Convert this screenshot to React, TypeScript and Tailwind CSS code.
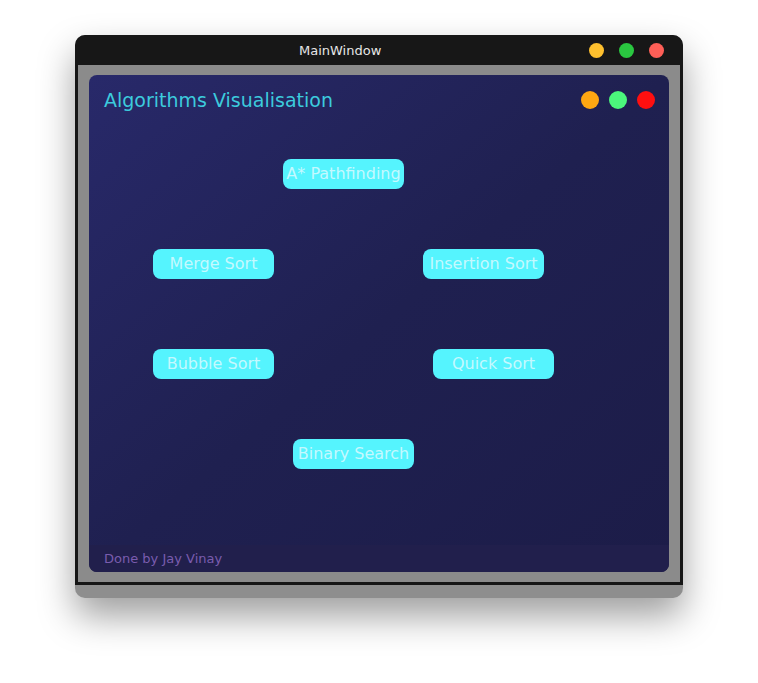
import React from "react";

const font = { fontFamily: '"DejaVu Sans", "Liberation Sans", sans-serif' };

function Btn({ label }: { label: string }) {
  return (
    <div className="w-[121px] h-[30px] rounded-[8px] bg-[#55f4fe] text-[#c4f9ff] text-[16px] flex items-center justify-center whitespace-nowrap leading-none">
      {label}
    </div>
  );
}

export default function App() {
  return (
    <div className="w-[758px] h-[683px] bg-white relative" style={font}>
      <div className="absolute left-[75px] top-[35px] w-[608px] rounded-[10px] bg-[#8e8e8e] shadow-[0_18px_36px_rgba(0,0,0,0.38)]">
        {/* title bar */}
        <div className="h-[30px] bg-[#171717] rounded-t-[10px] flex items-center relative">
          <div className="pl-[224px] text-[13px] text-[#e6e6e6] leading-none">MainWindow</div>
          <div className="ml-auto flex items-center gap-[15px] pr-[19px]">
            <div className="w-[15px] h-[15px] rounded-full bg-[#fec02e]" />
            <div className="w-[15px] h-[15px] rounded-full bg-[#2ac740]" />
            <div className="w-[15px] h-[15px] rounded-full bg-[#fe5f57]" />
          </div>
        </div>
        {/* body */}
        <div className="border-x-[3px] border-b-[3px] border-[#161616] bg-[#8b8b8b] px-[11px] pt-[10px] pb-[10px]">
          <div className="h-[497px] rounded-[8px] bg-gradient-to-br from-[#28296a] via-[#1f2050] to-[#1c1c48] flex flex-col overflow-hidden">
            <div className="flex items-center pl-[15px] pr-[14px] pt-[0px] h-[50px]">
              <div className="text-[19px] text-[#3ccbdd] leading-none">Algorithms Visualisation</div>
              <div className="ml-auto flex items-center gap-[10px]">
                <div className="w-[18px] h-[18px] rounded-full bg-[#fea712]" />
                <div className="w-[18px] h-[18px] rounded-full bg-[#4bf77c]" />
                <div className="w-[18px] h-[18px] rounded-full bg-[#fe0f10]" />
              </div>
            </div>
            <div className="flex flex-col">
              <div className="pl-[194px] mt-[34px]"><Btn label="A* Pathfinding" /></div>
              <div className="flex pl-[64px] mt-[60px] gap-[149px]"><Btn label="Merge Sort" /><Btn label="Insertion Sort" /></div>
              <div className="flex pl-[64px] mt-[70px] gap-[159px]"><Btn label="Bubble Sort" /><Btn label="Quick Sort" /></div>
              <div className="pl-[204px] mt-[60px]"><Btn label="Binary Search" /></div>
            </div>
            <div className="mt-auto h-[27px] bg-[#211f4c] pl-[15px] flex items-center">
              <span className="text-[13px] text-[#7a5cae] leading-none">Done by Jay Vinay</span>
            </div>
          </div>
        </div>
        <div className="h-[13px]" />
      </div>
    </div>
  );
}
